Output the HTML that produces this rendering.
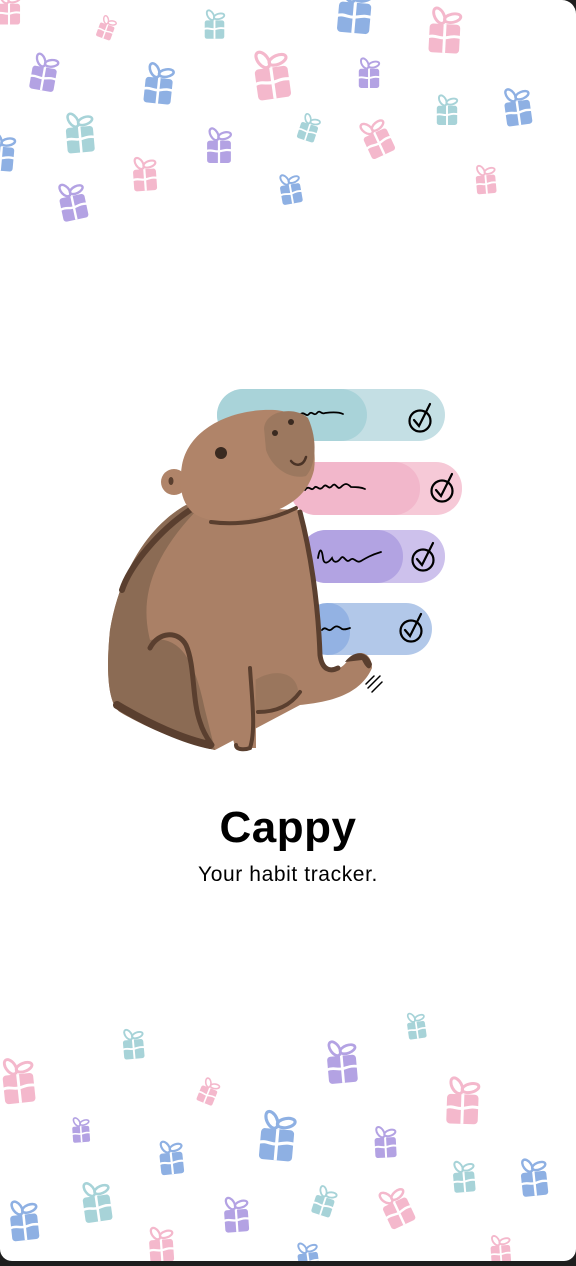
<!DOCTYPE html>
<html><head><meta charset="utf-8"><style>
html,body{margin:0;padding:0;background:#1e1e1e;}
.page{position:relative;width:576px;height:1261px;background:#fff;overflow:hidden;border-radius:0 14px 12px 12px;}
svg{position:absolute;left:0;top:0}
.t1{position:absolute;left:0;width:576px;text-align:center;top:803px;font:bold 44px "Liberation Sans",sans-serif;color:#000;letter-spacing:0.5px}
.t2{position:absolute;left:0;width:576px;text-align:center;top:863px;font:21px "Liberation Sans",sans-serif;color:#000;letter-spacing:0.6px}
</style></head><body>
<div class="page">
<svg width="576" height="1266" viewBox="0 0 576 1266">
<defs>
<g id="g">
<ellipse cx="6.5" cy="4.5" rx="2.6" ry="4.6" transform="rotate(-30 6.5 4.5)" fill="none" stroke="currentColor" stroke-width="1.6"/>
<ellipse cx="14" cy="5.5" rx="4.6" ry="2.3" transform="rotate(-15 14 5.5)" fill="none" stroke="currentColor" stroke-width="1.6"/>
<rect x="1.5" y="9" width="17" height="16" rx="2" fill="currentColor"/>
<path d="M10 9V25" stroke="#fff" stroke-width="1.6"/>
<path d="M1 16.5C5 15 7 17.5 11 16.5S16 15.5 19 16" stroke="#fff" stroke-width="1.6" fill="none"/>
</g>
</defs>
<g id="gifts">
<use href="#g" style="color:#f4b8cc" transform="translate(-4,-8) scale(1.3)"/>
<use href="#g" style="color:#f4b8cc" transform="translate(102,14) rotate(20) scale(0.9)"/>
<use href="#g" style="color:#a7d3d8" transform="translate(203,10) scale(1.15)"/>
<use href="#g" style="color:#8eb0e3" transform="translate(338,-16) rotate(5) scale(1.9)"/>
<use href="#g" style="color:#f4b8cc" transform="translate(428,7) rotate(3) scale(1.8)"/>
<use href="#g" style="color:#b3a2e3" transform="translate(33,52) rotate(10) scale(1.45)"/>
<use href="#g" style="color:#8eb0e3" transform="translate(145,62) rotate(6) scale(1.6)"/>
<use href="#g" style="color:#f4b8cc" transform="translate(249,53) rotate(-8) scale(1.95)"/>
<use href="#g" style="color:#b3a2e3" transform="translate(357,58) scale(1.2)"/>
<use href="#g" style="color:#a7d3d8" transform="translate(435,95) scale(1.2)"/>
<use href="#g" style="color:#8eb0e3" transform="translate(500,90) rotate(-8) scale(1.5)"/>
<use href="#g" style="color:#a7d3d8" transform="translate(62,114) rotate(-5) scale(1.6)"/>
<use href="#g" style="color:#b3a2e3" transform="translate(205,128) scale(1.4)"/>
<use href="#g" style="color:#a7d3d8" transform="translate(303,112) rotate(18) scale(1.05)"/>
<use href="#g" style="color:#f4b8cc" transform="translate(355,127) rotate(-25) scale(1.5)"/>
<use href="#g" style="color:#8eb0e3" transform="translate(-12,132) rotate(5) scale(1.5)"/>
<use href="#g" style="color:#f4b8cc" transform="translate(130,158) rotate(-4) scale(1.35)"/>
<use href="#g" style="color:#8eb0e3" transform="translate(276,176) rotate(-10) scale(1.2)"/>
<use href="#g" style="color:#f4b8cc" transform="translate(473,166) rotate(-5) scale(1.15)"/>
<use href="#g" style="color:#b3a2e3" transform="translate(54,186) rotate(-12) scale(1.5)"/>

<use href="#g" style="color:#a7d3d8" transform="translate(120,1030) rotate(-5) scale(1.2)"/>
<use href="#g" style="color:#a7d3d8" transform="translate(404,1014) rotate(-8) scale(1.05)"/>
<use href="#g" style="color:#f4b8cc" transform="translate(-2,1060) rotate(-6) scale(1.8)"/>
<use href="#g" style="color:#b3a2e3" transform="translate(323,1042) rotate(-5) scale(1.7)"/>
<use href="#g" style="color:#f4b8cc" transform="translate(204,1076) rotate(22) scale(1.0)"/>
<use href="#g" style="color:#f4b8cc" transform="translate(445,1077) rotate(2) scale(1.85)"/>
<use href="#g" style="color:#b3a2e3" transform="translate(70,1118) rotate(-4) scale(1.0)"/>
<use href="#g" style="color:#8eb0e3" transform="translate(260,1110) rotate(5) scale(1.95)"/>
<use href="#g" style="color:#b3a2e3" transform="translate(372,1127) rotate(-3) scale(1.25)"/>
<use href="#g" style="color:#8eb0e3" transform="translate(156,1142) rotate(-6) scale(1.35)"/>
<use href="#g" style="color:#a7d3d8" transform="translate(78,1184) rotate(-8) scale(1.6)"/>
<use href="#g" style="color:#b3a2e3" transform="translate(221,1198) rotate(-4) scale(1.4)"/>
<use href="#g" style="color:#a7d3d8" transform="translate(318,1184) rotate(18) scale(1.15)"/>
<use href="#g" style="color:#f4b8cc" transform="translate(374,1196) rotate(-25) scale(1.55)"/>
<use href="#g" style="color:#a7d3d8" transform="translate(450,1162) rotate(-5) scale(1.25)"/>
<use href="#g" style="color:#8eb0e3" transform="translate(6,1202) rotate(-6) scale(1.6)"/>
<use href="#g" style="color:#f4b8cc" transform="translate(146,1228) rotate(-4) scale(1.4)"/>
<use href="#g" style="color:#8eb0e3" transform="translate(294,1244) rotate(-8) scale(1.2)"/>
<use href="#g" style="color:#f4b8cc" transform="translate(488,1236) rotate(-4) scale(1.15)"/>
<use href="#g" style="color:#8eb0e3" transform="translate(517,1160) rotate(-6) scale(1.5)"/>
</g>

<!-- pills -->
<rect x="217" y="389" width="228" height="52" rx="26" fill="#c4dfe4"/>
<rect x="217" y="389" width="150" height="52" rx="26" fill="#a9d3d9"/>
<rect x="290" y="462" width="172" height="53" rx="26" fill="#f6c9d7"/>
<rect x="290" y="462" width="130" height="53" rx="26" fill="#f2b7cb"/>
<rect x="300" y="530" width="145" height="53" rx="26" fill="#cdc1ec"/>
<rect x="300" y="530" width="103" height="53" rx="26" fill="#b2a3e2"/>
<rect x="305" y="603" width="127" height="52" rx="26" fill="#b2c8e9"/>
<rect x="305" y="603" width="45" height="52" rx="22" fill="#93b2e3"/>
<g fill="none" stroke="#000" stroke-width="2.2" stroke-linecap="round">
<circle cx="420" cy="421" r="10.5"/><path d="M414 420l5 6 11-22"/>
<circle cx="442" cy="491" r="10.5"/><path d="M436 490l5 6 11-22"/>
<circle cx="423" cy="560" r="10.5"/><path d="M417 559l5 6 11-22"/>
<circle cx="411" cy="631" r="10.5"/><path d="M405 630l5 6 11-22"/>
<path d="M300 415c4-5 6 3 9-1s5 3 8-1 4 2 8 0c8-1 14-1 18 1" stroke-width="1.8"/>
<path d="M305 490c4-6 6 2 9-2s5 4 9-1 5 4 9-1 5 5 9 1 6-4 10 0c5 0 10 0 14 2" stroke-width="1.8"/>
<path d="M318 558c2-12 4-8 5 0s6 4 9 0c2 6 6 4 9 0s5 6 9 2 6 4 11 1 10-6 20-9" stroke-width="1.8"/>
<path d="M322 630c4-5 6 3 10-1s6-3 10 0c3 1 5 0 8-1" stroke-width="1.8"/>
<path d="M368 688l12-12M372 692l10-10M366 684l8-8" stroke-width="1.5"/>
</g>

<!-- capybara -->
<g>
<path d="M186 505C150 525 120 570 110 630C105 680 110 705 120 712C150 730 190 745 215 750L300 705C330 702 360 695 372 668C372 652 358 648 348 660C340 672 330 672 322 660C320 600 312 545 300 510Z" fill="#aa8066"/>
<path d="M186 505C150 525 120 570 110 630C105 680 110 705 120 712C150 730 190 745 215 750L205 710C195 660 180 635 150 640C140 600 150 560 195 512Z" fill="#8b6b54"/>
<path d="M190 510C160 530 130 565 122 590" fill="none" stroke="#5a3f2f" stroke-width="6" stroke-linecap="round"/>
<path d="M117 705C150 725 185 740 210 745" fill="none" stroke="#5a3f2f" stroke-width="8" stroke-linecap="round"/>
<path d="M150 648C158 632 178 630 186 645C195 665 192 700 200 722C204 735 210 742 212 745" fill="none" stroke="#5a3f2f" stroke-width="5" stroke-linecap="round"/>
<path d="M255 680C275 668 295 672 298 690C290 706 275 712 255 712Z" fill="#9a765d"/>
<path d="M258 712C275 712 290 706 300 692" fill="none" stroke="#5a3f2f" stroke-width="4" stroke-linecap="round"/>
<path d="M227 668C226 700 230 735 236 748L256 748C256 720 255 690 256 668Z" fill="#aa8066"/>
<path d="M250 668C252 700 256 730 250 748C245 750 236 750 236 745" fill="none" stroke="#5a3f2f" stroke-width="4" stroke-linecap="round"/>
<path d="M300 512C310 550 318 600 320 655C322 670 330 672 338 668" fill="none" stroke="#5a3f2f" stroke-width="5" stroke-linecap="round"/>
<path d="M345 662C352 652 366 648 372 664C370 672 366 668 362 660" fill="#5a3f2f"/>
<circle cx="174" cy="482" r="13" fill="#b08469"/>
<ellipse cx="171" cy="481" rx="2.5" ry="4" fill="#5a3f2f"/>
<path d="M182 465C188 430 230 408 275 410C305 412 318 440 314 470C308 495 288 510 252 518C225 524 205 522 192 512C180 500 179 483 182 465Z" fill="#b08469"/>
<path d="M264 428C266 410 295 406 308 418C318 440 316 465 306 476C290 480 272 468 266 450Z" fill="#9c785f"/>
<circle cx="221" cy="453" r="6" fill="#3a2a20"/>
<circle cx="275" cy="433" r="3" fill="#3a2a20"/>
<circle cx="291" cy="422" r="3" fill="#3a2a20"/>
<path d="M291 461c4 5 12 6 15-4" fill="none" stroke="#4a3326" stroke-width="2.5" stroke-linecap="round"/>
<path d="M211 522C240 526 272 520 296 508" fill="none" stroke="#5a3f2f" stroke-width="4" stroke-linecap="round"/>
</g>
</svg>
<div class="t1">Cappy</div>
<div class="t2">Your habit tracker.</div>
</div>
</body></html>
